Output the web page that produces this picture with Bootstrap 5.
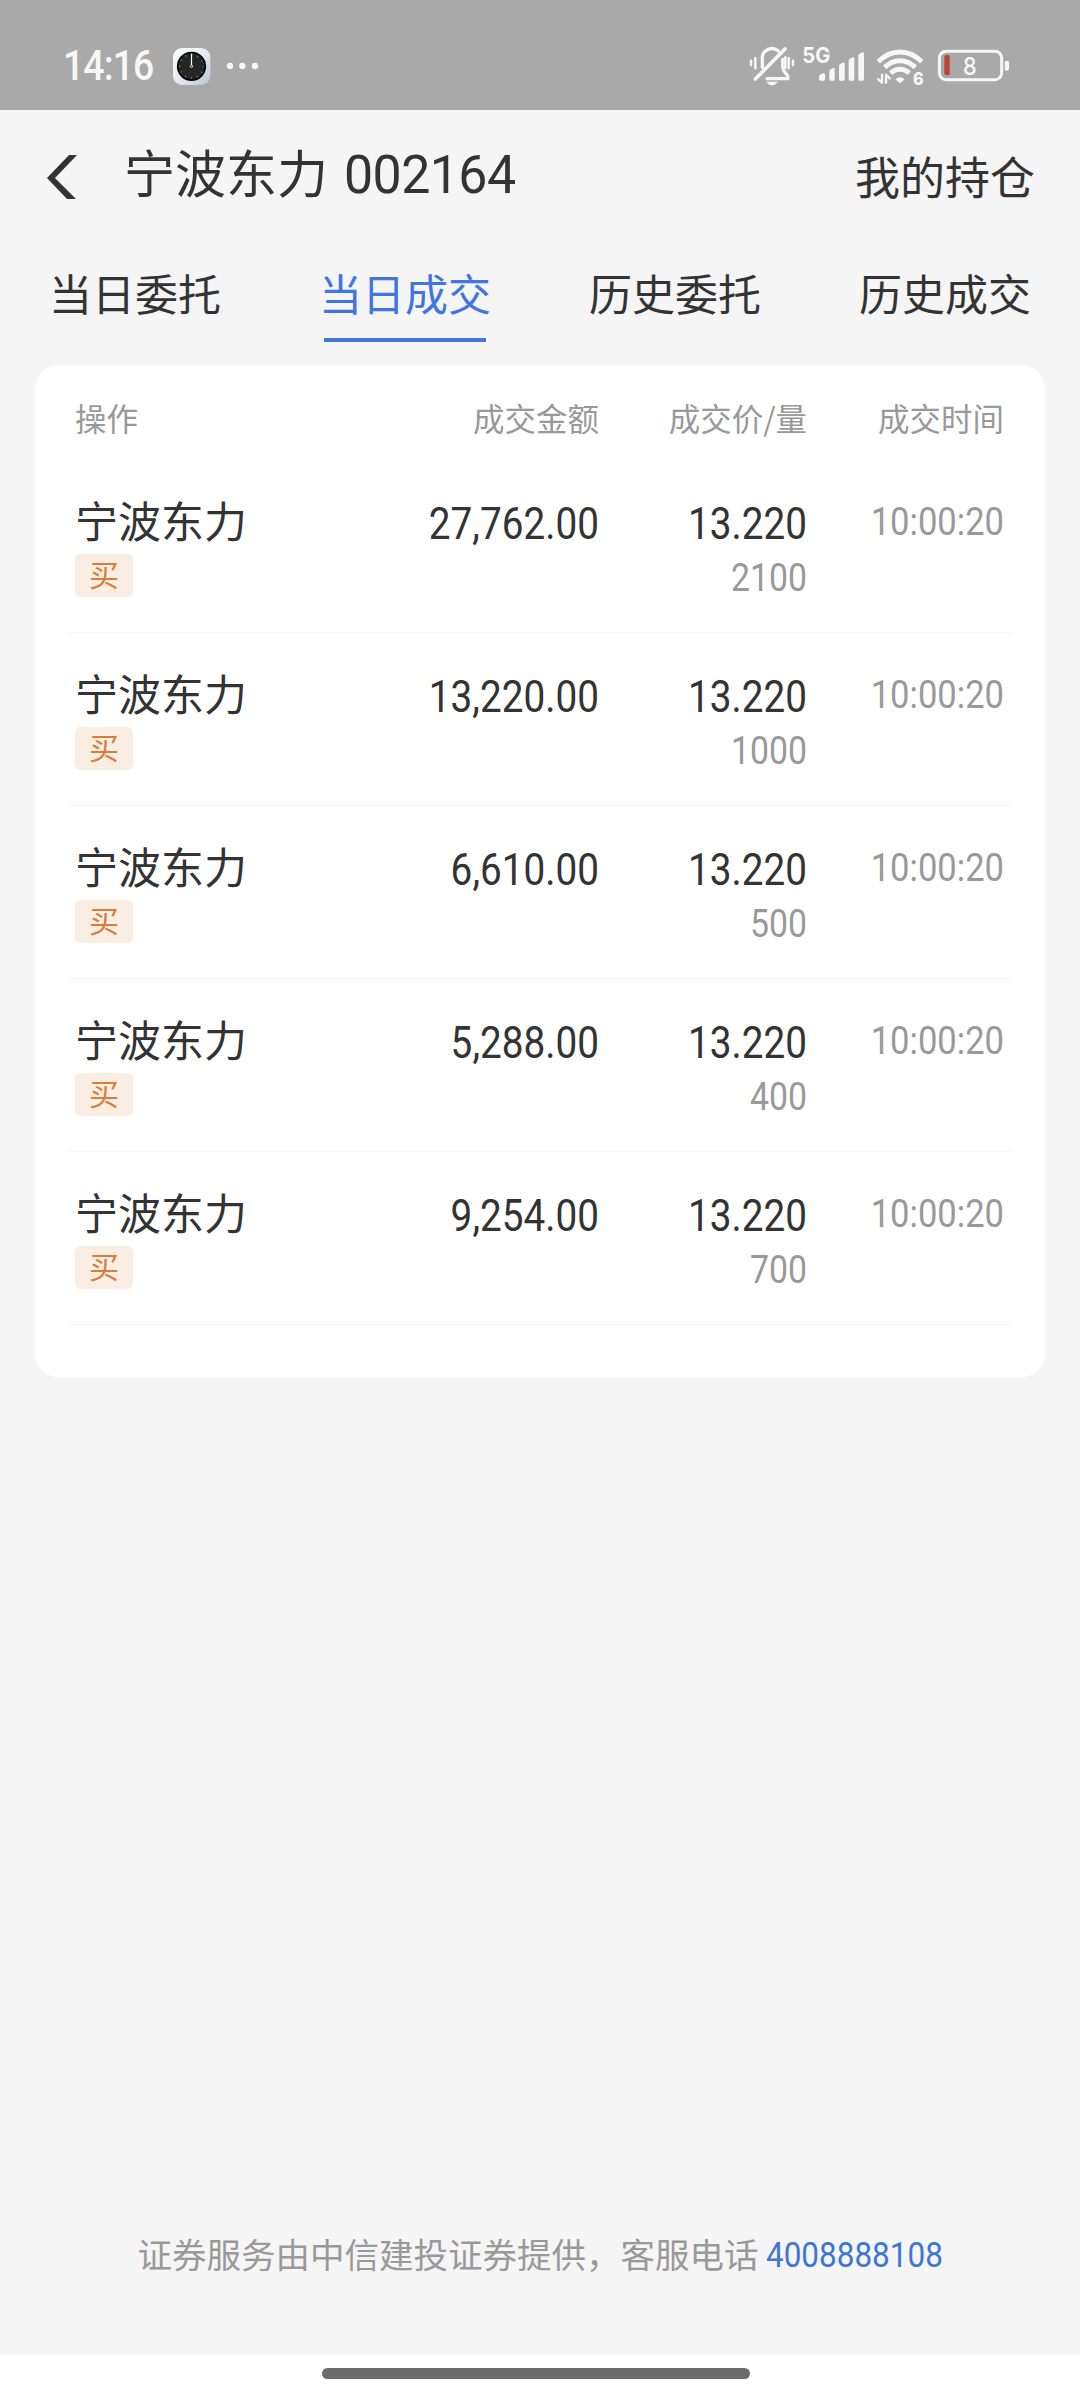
<!DOCTYPE html>
<html lang="zh-CN">
<head>
<meta charset="utf-8">
<meta name="viewport" content="width=device-width, initial-scale=1">
<title>当日成交</title>
<link href="https://cdn.jsdelivr.net/npm/bootstrap@5.3.0/dist/css/bootstrap.min.css" rel="stylesheet">
<style>
  body { background:#f5f5f5; color:#333; font-family:"Noto Sans CJK SC",sans-serif; min-height:2400px; }
  .status-bar { height:110px; background:#a9a9a9; color:#f7f7f7; padding:0 55px 0 63px; }
  .clock-text { font:500 42px/60px Roboto,sans-serif; letter-spacing:-1px; transform:scaleX(.89); transform-origin:left; width:97px; margin-top:36px; white-space:nowrap; }
  .status-app { margin-top:40px; }
  .status-icons { margin-top:30px; }
  .top-bar { height:123px; padding:0 45px 0 46px; }
  .stock-title { font-size:51px; line-height:60px; margin:31px 0 0 45px; }
  .stock-code { font-family:Roboto,sans-serif; font-size:53.5px; letter-spacing:-.6px; margin-left:16px; padding-top:4px; transform:scaleX(.97); transform-origin:left; }
  .holdings { font-size:45px; line-height:60px; margin-top:36px; }
  .back-icon { margin-top:44px; }
  .tab-row { height:132px; }
  .tab-row .nav-link { font-size:43px; line-height:60px; padding:29px 0 0; color:#333; border-radius:0; }
  .tab-row .nav-link.active { color:#4075e3; }
  .tab-row .nav-link.active::after { content:""; display:block; width:162px; height:4px; margin:16px auto 0; background:#4075e3; }
  .deal-card { margin:0 35px; height:1012px; border-radius:24px; padding:0 34px; }
  .deal-grid { display:grid; grid-template-columns:250px 274px 208px 197px; padding-left:6px; }
  .deal-head { height:95px; padding-top:22px; font-size:31.5px; line-height:60px; color:#999; }
  .deal-item { height:173px; border-bottom:1px solid #f5f5f5; }
  .deal-name { font-size:43px; line-height:60px; padding-top:29px; }
  .side-tag { width:58px; height:43px; margin-top:5px; border-radius:5px; background:#faeee3; color:#d77d3d; font-size:30px; line-height:39px; }
  .num { font-family:Roboto,sans-serif; transform:scaleX(.89); transform-origin:right; white-space:nowrap; }
  .num-main { font-size:43.5px; line-height:60px; padding-top:35px; }
  .num-qty { font-size:38px; line-height:44px; margin-top:1px; color:#999; }
  .num-time { font-size:38px; line-height:60px; padding-top:32px; color:#999; transform:scaleX(.91); position:relative; }
  .service-note { font-size:34.5px; line-height:60px; color:#999; padding-left:1px; margin-bottom:70px; }
  .service-tel { font-family:Roboto,sans-serif; font-size:34.5px; color:#4075d6; text-decoration:none; padding-top:2px; transform:scaleX(.912); transform-origin:left; width:178px; margin-left:7px; }
  .gesture-area { height:45px; background:#fff; padding-top:13px; }
  .gesture-bar { width:428px; height:11px; border-radius:6px; background:#6b6b6b; margin-left:322px; }
</style>
<script src="https://cdn.jsdelivr.net/npm/bootstrap@5.3.0/dist/js/bootstrap.bundle.min.js"></script>
</head>
<body class="d-flex flex-column m-0">
<header class="status-bar d-flex align-items-start">
  <div class="clock-text">14:16</div>
  <svg class="status-app" width="110" height="50" viewBox="0 0 330 150">
    <defs><linearGradient id="face" x1="0" y1="0" x2="1" y2="1"><stop offset="0" stop-color="#fff"/><stop offset=".5" stop-color="#e6ebf2"/><stop offset="1" stop-color="#b9c4d6"/></linearGradient></defs>
    <rect x="39" y="24" width="112" height="111" rx="27" fill="url(#face)"/>
    <circle cx="94.500" cy="79" r="44" fill="#050505"/><circle cx="94.500" cy="79" r="39" fill="#262626"/>
    <circle cx="94.500" cy="79" r="35" fill="none" stroke="#999" stroke-width="5" stroke-dasharray="2.500 15.826" stroke-dashoffset="1.200"/>
    <path d="M94.500 41V75" stroke="#fff" stroke-width="3.500"/><circle cx="94.500" cy="79" r="3.500" fill="none" stroke="#fff" stroke-width="2.500"/>
    <g fill="#f7f7f7"><circle cx="210" cy="78" r="9.500"/><circle cx="247" cy="78" r="9.500"/><circle cx="285" cy="78" r="9.500"/></g>
  </svg>
  <svg class="status-icons ms-auto" width="290" height="70" viewBox="0 0 870 210" fill="none" stroke="#f7f7f7" stroke-linecap="round" stroke-linejoin="round">
    <g stroke-width="10">
      <path d="M82 112V86a29 29 0 0 1 48-23"/><path d="M143 88V110Q144 122 158 137V146H96" stroke-linejoin="miter"/>
      <path d="M150 57L61 147" stroke-width="11"/>
      <path d="M48 92V106M61 84V115M161 84V115M174 92V106M151 82V113" stroke-width="7.500"/>
    </g>
    <path d="M94 155H129Q120 166 111 166T94 155Z" fill="#f7f7f7" stroke="none"/>
    <text x="202" y="99" font-family="Inter,sans-serif" font-weight="700" font-size="64" textLength="84" lengthAdjust="spacingAndGlyphs" fill="#f7f7f7" stroke="none">5G</text>
    <g fill="#f7f7f7" stroke="none">
      <path d="M252 151V139Q252 135 257 133L266 130Q270 129 270 133V147Q270 152 265 152H256Q252 152 252 148Z"/>
      <path d="M283 147V124Q283 120 287 118L294 114Q299 112 299 117V147Q299 152 295 152H287Q283 152 283 147Z"/>
      <path d="M312 147V108Q312 104 316 102L324 98Q329 96 329 101V147Q329 152 325 152H316Q312 152 312 147Z"/>
      <path d="M341 147V92Q341 88 345 86L352 82Q358 80 358 85V147Q358 152 354 152H345Q341 152 341 147Z"/>
      <path d="M370 147V77Q370 73 374 71L381 67Q387 65 387 70V147Q387 152 383 152H374Q370 152 370 147Z"/>
    </g>
    <g stroke-width="15" stroke-linecap="butt">
      <path d="M430 95Q459 66 495 66T560 95"/><path d="M449 112Q470 92 495 92T541 112"/><path d="M467 130Q479 118 495 118T523 130"/>
    </g>
    <path d="M481 148Q495 136 509 148L499 157Q495 160 491 157Z" fill="#f7f7f7" stroke="none"/>
    <path d="M441 134V158L429 147M453 158V134L464 145" stroke-width="7"/>
    <text x="534" y="164" font-family="Inter,sans-serif" font-weight="800" font-size="53" textLength="32" lengthAdjust="spacingAndGlyphs" fill="#f7f7f7" stroke="none">6</text>
    <rect x="613" y="64" width="187" height="85" rx="20" stroke-width="9"/>
    <rect x="628" y="75" width="16" height="61" rx="6" fill="#bd4336" stroke="none"/>
    <rect x="809" y="92" width="13" height="30" rx="6" fill="#f7f7f7" stroke="none"/>
    <text x="684" y="135" font-family="Inter,sans-serif" font-weight="500" font-size="74" textLength="41" lengthAdjust="spacingAndGlyphs" fill="#f7f7f7" stroke="none">8</text>
  </svg>
</header>

<div class="top-bar d-flex align-items-start">
  <svg class="back-icon" width="33" height="46" viewBox="0 0 33 46"><path d="M23 1H31L9 24L30 45H21L1 24Z" fill="#333"/></svg>
  <h1 class="stock-title fw-normal d-flex">宁波东力<span class="stock-code">002164</span></h1>
  <div class="holdings ms-auto">我的持仓</div>
</div>

<ul class="tab-row nav nav-justified flex-nowrap">
  <li class="nav-item w-25"><a class="nav-link" href="#">当日委托</a></li>
  <li class="nav-item w-25"><a class="nav-link active" href="#">当日成交</a></li>
  <li class="nav-item w-25"><a class="nav-link" href="#">历史委托</a></li>
  <li class="nav-item w-25"><a class="nav-link" href="#">历史成交</a></li>
</ul>

<main class="deal-card bg-white">
  <div class="deal-grid deal-head text-end"><div class="text-start">操作</div><div>成交金额</div><div>成交价/量</div><div>成交时间</div></div>
  <div class="deal-grid deal-item text-end">
    <div class="text-start"><div class="deal-name">宁波东力</div><div class="side-tag text-center">买</div></div>
    <div class="num num-main">27,762.00</div><div><div class="num num-main">13.220</div><div class="num num-qty">2100</div></div><div class="num num-time">10:00:20</div>
  </div>
  <div class="deal-grid deal-item text-end">
    <div class="text-start"><div class="deal-name">宁波东力</div><div class="side-tag text-center">买</div></div>
    <div class="num num-main">13,220.00</div><div><div class="num num-main">13.220</div><div class="num num-qty">1000</div></div><div class="num num-time">10:00:20</div>
  </div>
  <div class="deal-grid deal-item text-end">
    <div class="text-start"><div class="deal-name">宁波东力</div><div class="side-tag text-center">买</div></div>
    <div class="num num-main">6,610.00</div><div><div class="num num-main">13.220</div><div class="num num-qty">500</div></div><div class="num num-time">10:00:20</div>
  </div>
  <div class="deal-grid deal-item text-end">
    <div class="text-start"><div class="deal-name">宁波东力</div><div class="side-tag text-center">买</div></div>
    <div class="num num-main">5,288.00</div><div><div class="num num-main">13.220</div><div class="num num-qty">400</div></div><div class="num num-time">10:00:20</div>
  </div>
  <div class="deal-grid deal-item text-end">
    <div class="text-start"><div class="deal-name">宁波东力</div><div class="side-tag text-center">买</div></div>
    <div class="num num-main">9,254.00</div><div><div class="num num-main">13.220</div><div class="num num-qty">700</div></div><div class="num num-time">10:00:20</div>
  </div>
</main>

<footer class="mt-auto">
  <div class="service-note d-flex justify-content-center">证券服务由中信建投证券提供，客服电话<a class="service-tel" href="tel:4008888108">4008888108</a></div>
  <div class="gesture-area"><div class="gesture-bar"></div></div>
</footer>
</body>
</html>
